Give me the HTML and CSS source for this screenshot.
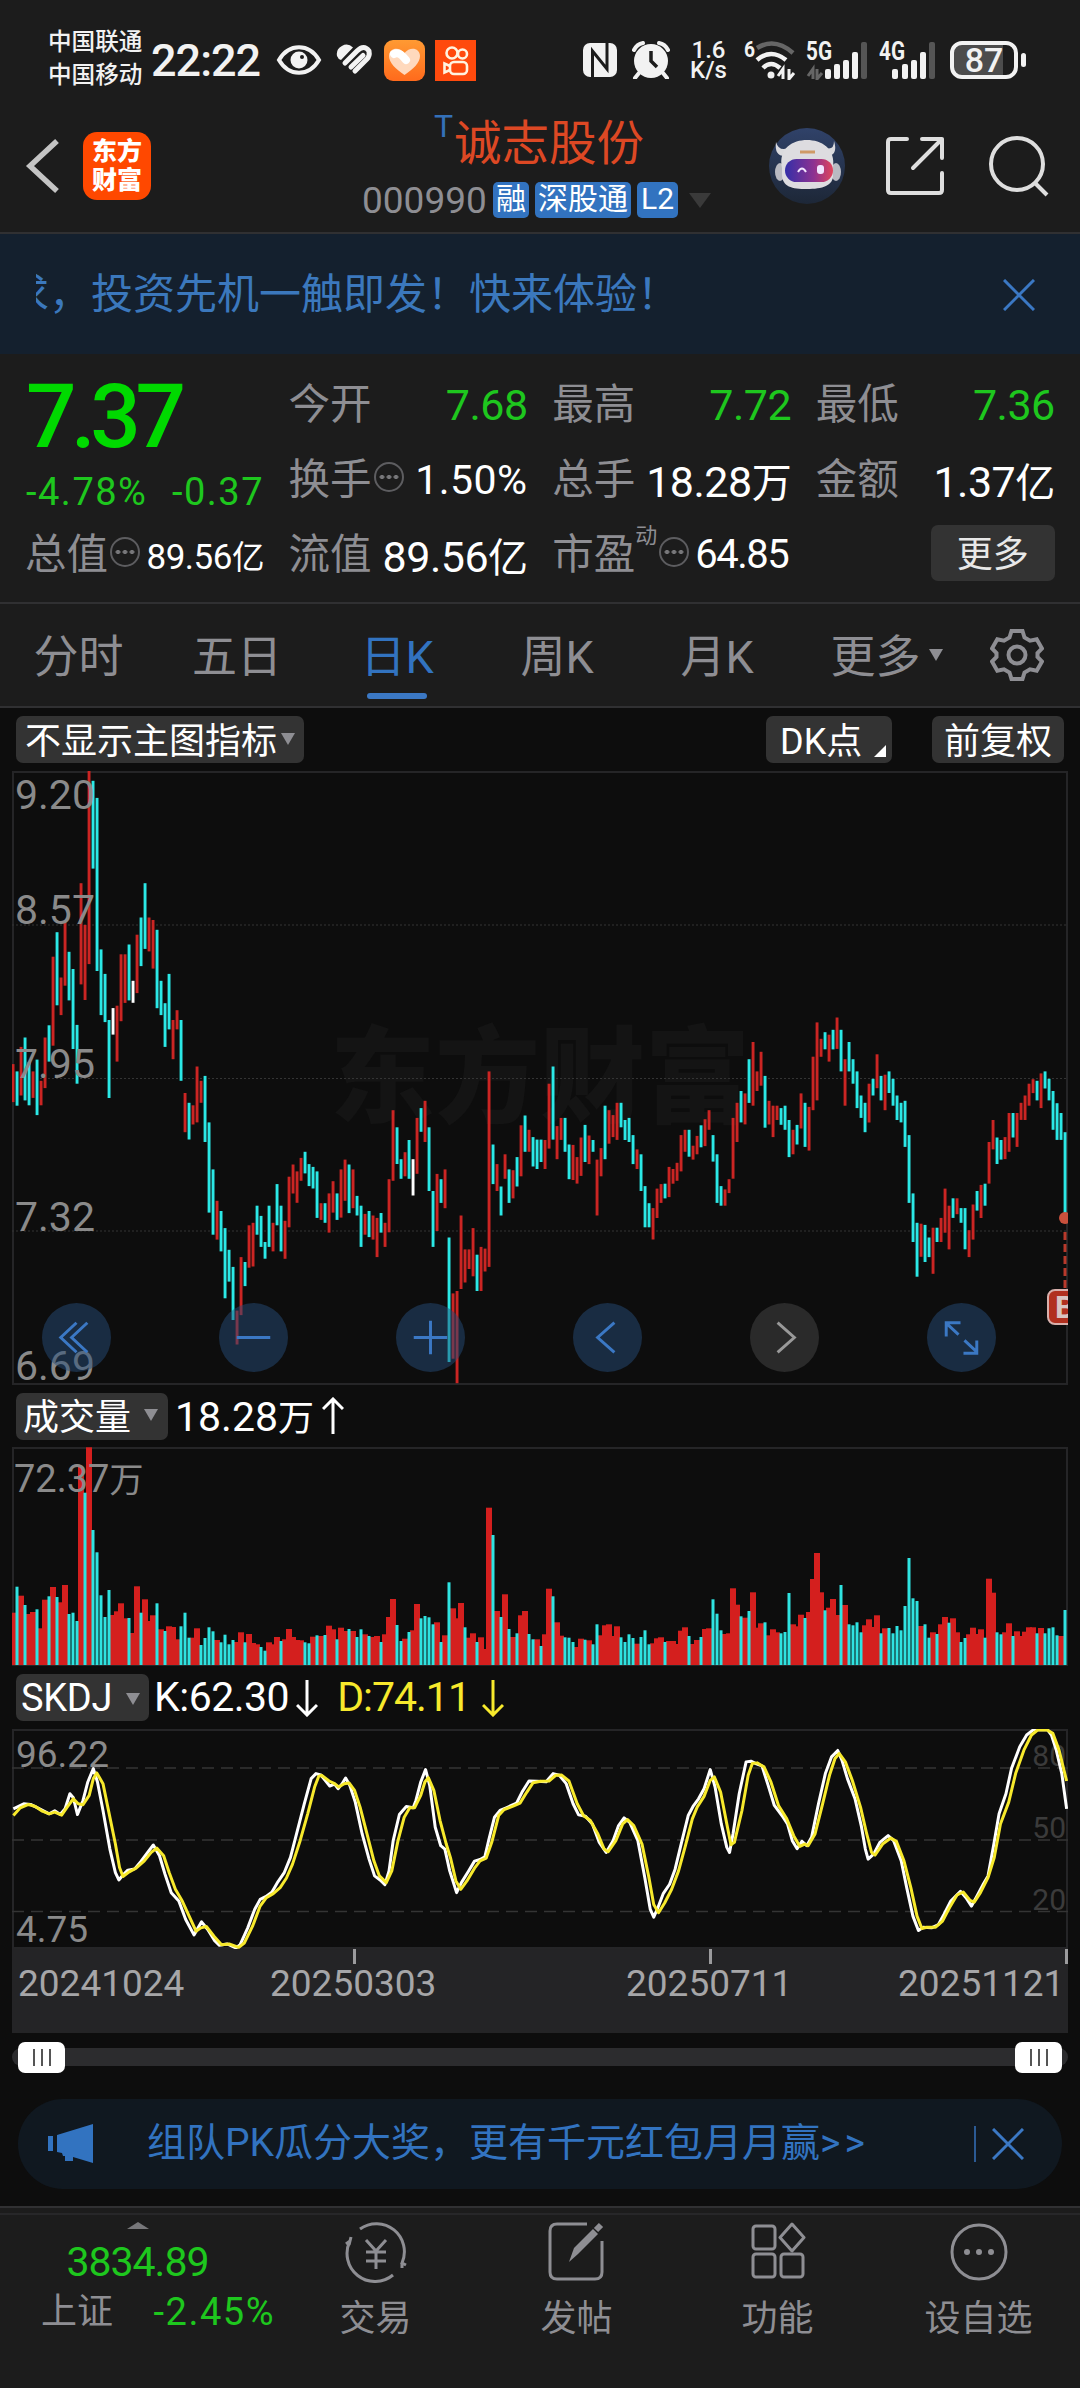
FILE: index.html
```html
<!DOCTYPE html>
<html lang="zh-CN">
<head>
<meta charset="UTF-8">
<meta name="viewport" content="width=device-width, initial-scale=1">
<title>诚志股份 000990</title>
<link rel="stylesheet" href="styles.css">
</head>
<body>

<!-- Status bar -->
<div class="status">
  <div class="carriers"><span>中国联通</span><span>中国移动</span></div>
  <div class="clock">22:22</div>
  <svg class="st-eye" width="46" height="32" viewBox="0 0 46 32"><path d="M3 16C13-1 33-1 43 16C33 33 13 33 3 16Z" fill="none" stroke="#f2f2f2" stroke-width="4"/><circle cx="23" cy="16" r="8.5" fill="#f2f2f2"/><circle cx="26" cy="13" r="2" fill="#1c1c1c"/></svg>
  <svg class="st-health" width="38" height="32" viewBox="0 0 38 32" fill="none" stroke="#f2f2f2" stroke-width="5" stroke-linecap="round"><path d="M1 12A9.500 9.500 0 0 1 17 3.500L5 16Q2 15 1 12Z" fill="#f2f2f2" stroke="none"/><path d="M9 19L21 7Q28 0 33 7Q34 12 31 15L19 27M15 23L27 11.500"/></svg>
  <svg class="st-heart" width="41" height="41" viewBox="0 0 41 41"><defs><linearGradient id="og" x1="0" y1="0" x2="0" y2="1"><stop offset="0" stop-color="#ff9a33"/><stop offset="1" stop-color="#ff6a1c"/></linearGradient></defs><rect width="41" height="41" rx="9" fill="url(#og)"/><path d="M20.500 35C12 29 5 23 5 16C5 8 15 6 20.500 13C26 6 36 8 36 16C36 23 29 29 20.500 35Z" fill="#ffd9bd"/><path d="M10 14Q15 11 22 20" stroke="#fff" stroke-width="8" fill="none" stroke-linecap="round"/></svg>
  <svg class="st-video" width="41" height="41" viewBox="0 0 41 41"><rect width="41" height="41" fill="#ff4a0d"/><g fill="none" stroke="#fff3e0" stroke-width="2.600"><circle cx="17" cy="13" r="5.500"/><circle cx="27.500" cy="14" r="4.500"/><rect x="15" y="22" width="17" height="12" rx="4"/><path d="M15 26L9.500 23.500V32.500L15 30"/></g></svg>

  <svg class="st-nfc" width="34" height="36" viewBox="0 0 34 36"><rect y="1" width="34" height="34" rx="7" fill="#f2f2f2"/><path d="M9.500 31V9L24 27V5" fill="none" stroke="#1c1c1c" stroke-width="3"/><path d="M9.500 31V36M24 5V0" stroke="#1c1c1c" stroke-width="3"/></svg>
  <svg class="st-alarm" width="38" height="38" viewBox="0 0 38 38"><circle cx="19" cy="20" r="17" fill="#f2f2f2"/><path d="M2 9Q5 3 11 2M36 9Q33 3 27 2M7 32L3 37M31 32L35 37" stroke="#f2f2f2" stroke-width="4" stroke-linecap="round"/><path d="M19 10V20L25 26" fill="none" stroke="#1c1c1c" stroke-width="3.500"/></svg>
  <div class="speed"><span>1.6</span><span>K/s</span></div>
  <svg class="st-wifi" width="52" height="40" viewBox="0 0 52 40" fill="none" stroke="#f2f2f2" stroke-width="4.500"><text class="svg-num" x="0" y="17" font-size="22" textLength="11" lengthAdjust="spacingAndGlyphs" fill="#f2f2f2" stroke="none">6</text><path d="M13 8Q31-3 49 13" stroke="#666"/><path d="M13 20Q27 8 42 20M19 28Q27 20 36 28"/><circle cx="27" cy="35" r="3.500" fill="#f2f2f2" stroke="none"/><path d="M39 39V29L34 36M45 29V39L50 33" stroke-width="3"/></svg>
  <svg class="st-signal" width="62" height="40" viewBox="0 0 62 40"><text class="svg-num" x="0" y="20" font-size="25" textLength="26" lengthAdjust="spacingAndGlyphs" fill="#f2f2f2">5G</text><path d="M7 39V29L2 36M11 29V39L16 33" stroke="#666" stroke-width="3" fill="none"/><g fill="#f2f2f2"><rect x="19" y="29" width="6" height="10" rx="2"/><rect x="28" y="24" width="6" height="15" rx="2"/><rect x="37" y="20" width="6" height="19" rx="2"/><rect x="46" y="12" width="6" height="27" rx="2"/></g><rect x="55" y="2" width="6" height="37" rx="2" fill="#555"/></svg>
  <svg class="st-signal4" width="57" height="40" viewBox="0 0 57 40"><text class="svg-num" x="0" y="20" font-size="25" textLength="26" lengthAdjust="spacingAndGlyphs" fill="#f2f2f2">4G</text><g fill="#f2f2f2"><rect x="13" y="29" width="6" height="10" rx="2"/><rect x="23" y="24" width="6" height="15" rx="2"/><rect x="32" y="20" width="6" height="19" rx="2"/><rect x="41" y="12" width="6" height="27" rx="2"/></g><rect x="50" y="2" width="6" height="37" rx="2" fill="#555"/></svg>
  <div class="battery"><span>87</span></div>
</div>

<!-- Title bar -->
<header class="header">
  <svg class="back" width="36" height="56" viewBox="0 0 36 56"><path d="M32 3L5 28L32 53" fill="none" stroke="#c4c4c4" stroke-width="5.500"/></svg>
  <div class="logo"><span>东方</span><span>财富</span></div>
  <div class="title">
    <div class="stock-name"><sup>T</sup>诚志股份</div>
    <div class="stock-code"><span class="code">000990</span><b>融</b><b>深股通</b><b>L2</b><i class="tri tri-dark"></i></div>
  </div>
  <svg class="robot" width="76" height="76" viewBox="0 0 76 76">
    <defs>
      <linearGradient id="bg" x1="0" y1="0" x2="0" y2="1"><stop offset="0" stop-color="#304269"/><stop offset="1" stop-color="#1d2737"/></linearGradient>
      <linearGradient id="visor"><stop offset="0" stop-color="#342fa8"/><stop offset=".6" stop-color="#8d3291"/><stop offset="1" stop-color="#e0455c"/></linearGradient>
    </defs>
    <circle cx="38" cy="38" r="38" fill="url(#bg)"/>
    <path d="M7 14Q5 29 17 28L22 19Q10 25 7 14ZM65 13Q69 26 60 28L54 19Q65 24 65 13Z" fill="#dadade"/>
    <ellipse cx="11" cy="44" rx="5" ry="9" fill="#b9bac2"/><ellipse cx="67" cy="44" rx="5" ry="9" fill="#b9bac2"/>
    <path d="M13 40C9 20 24 12 38 12S67 20 64 40V46C65 58 53 61 38 61S13 59 13 46Z" fill="#dddce0"/>
    <path d="M31 24H46" stroke="#cf9a66" stroke-width="3"/>
    <rect x="16" y="31" width="48" height="23" rx="11.500" fill="url(#visor)"/>
    <path d="M29 44Q33 37 37 44" fill="none" stroke="#f4e6ff" stroke-width="2"/><rect x="48" y="37" width="7" height="9" rx="3" fill="#f1e5ff"/>
  </svg>
  <svg class="share" width="60" height="60" viewBox="0 0 60 60" fill="none" stroke="#dedede" stroke-width="4" stroke-linecap="round" stroke-linejoin="round"><path d="M22 3H6Q3 3 3 6V54Q3 57 6 57H54Q57 57 57 54V37M37 3H57V22M57 3L28 32"/></svg>
  <svg class="search" width="62" height="62" viewBox="0 0 62 62" fill="none" stroke="#dedede" stroke-width="4"><circle cx="29" cy="29" r="26"/><path d="M47 48L59 60"/></svg>
</header>

<!-- Promo marquee -->
<div class="marquee">
  <div class="marquee-clip"><span>求，投资先机一触即发！快来体验！</span></div>
  <svg width="32" height="32" viewBox="0 0 32 32"><path d="M1 1L31 31M31 1L1 31" stroke="#3b78c4" stroke-width="3"/></svg>
</div>

<!-- Quote -->
<section class="quote">
  <div class="price-box">
    <div class="price">7.37</div>
    <div class="change"><span>-4.78%</span><span>-0.37</span></div>
  </div>
  <div class="cell"><label>今开</label><em class="down">7.68</em></div>
  <div class="cell"><label>最高</label><em class="down">7.72</em></div>
  <div class="cell"><label>最低</label><em class="down">7.36</em></div>
  <div class="cell"><label>换手</label><i class="info"></i><em class="mid">1.50%</em></div>
  <div class="cell"><label>总手</label><em>18.28<u>万</u></em></div>
  <div class="cell"><label>金额</label><em>1.37<u>亿</u></em></div>
  <div class="cell"><label>总值</label><i class="info"></i><em class="small">89.56<u>亿</u></em></div>
  <div class="cell"><label>流值</label><em>89.56<u>亿</u></em></div>
  <div class="cell"><label>市盈</label><sup>动</sup><i class="info"></i><em class="pe">64.85</em></div>
  <div class="cell cell-more"><button>更多</button></div>
</section>

<!-- Period tabs -->
<nav class="tabs">
  <a>分时</a><a>五日</a><a class="active">日K</a><a>周K</a><a>月K</a><a class="more">更多<i class="tri tri-small"></i></a>
  <svg width="54" height="54" viewBox="0 0 54 54" fill="none" stroke="#8e8e93" stroke-width="4" stroke-linejoin="miter"><path d="M21.500 3H32.500L34.500 9.500L40 12.700L46.700 11.200L52 20.500L47.500 25V29L52 33.500L46.700 42.800L40 41.300L34.500 44.500L32.500 51H21.500L19.500 44.500L14 41.300L7.300 42.800L2 33.500L6.500 29V25L2 20.500L7.300 11.200L14 12.700L19.500 9.500Z"/><circle cx="27" cy="27" r="8.500"/></svg>
</nav>

<main class="charts">
  <div class="tools">
    <span class="chip chip-main">不显示主图指标<i class="tri tri-small"></i></span>
    <span class="chip chip-dk">DK点<i class="corner"></i></span>
    <span class="chip chip-fq">前复权</span>
  </div>

  <div class="chart chart-k">
    <div class="watermark">东方财富</div>
    <svg id="kline" width="1056" height="614"></svg>
    <div class="scale"><span>9.20</span><span>8.57</span><span>7.95</span><span>7.32</span><span>6.69</span></div>
    <div class="controls">
      <i><svg viewBox="0 0 70 70"><path d="M35 20L19 35L35 50M46 20L30 35L46 50"/></svg></i>
      <i><svg viewBox="0 0 70 70"><path d="M18 35H52"/></svg></i>
      <i><svg viewBox="0 0 70 70"><path d="M18 35H52M35 18V52"/></svg></i>
      <i><svg viewBox="0 0 70 70"><path d="M42 20L25 35L42 50"/></svg></i>
      <i class="off"><svg viewBox="0 0 70 70"><path d="M28 20L45 35L28 50"/></svg></i>
      <i><svg viewBox="0 0 70 70"><path d="M32 32L20 21M19.500 34V20H34M38 38L50 49M50.500 38V51H37"/></svg></i>
    </div>
    <div class="buy">B</div>
  </div>

  <div class="ind-head head-vol">
    <span class="chip chip-vol">成交量<i class="tri tri-mid"></i></span>
    <span class="ind-val">18.28<u>万</u></span>
    <svg class="arrow" width="22" height="38" viewBox="0 0 22 38"><path d="M11 37V3M1 12L11 2L21 12"/></svg>
  </div>
  <div class="chart chart-vol">
    <svg id="volume" width="1056" height="219"></svg>
    <div class="vol-max">72.37<u>万</u></div>
  </div>

  <div class="ind-head">
    <span class="chip chip-skdj">SKDJ<i class="tri tri-mid"></i></span>
    <span class="ind-val">K:62.30</span>
    <svg class="arrow" width="22" height="38" viewBox="0 0 22 38"><path d="M11 1V35M1 26L11 36L21 26"/></svg>
    <span class="ind-val ind-d">D:74.11</span>
    <svg class="arrow arrow-d" width="22" height="38" viewBox="0 0 22 38"><path d="M11 1V35M1 26L11 36L21 26"/></svg>
  </div>
  <div class="chart chart-skdj">
    <div class="levels"><span>80</span><span>50</span><span>20</span></div>
    <svg width="1056" height="220" viewBox="18 177 1532 656" preserveAspectRatio="none">
      <path class="grid-line" d="M18 293H1550M18 508H1550M18 721H1550"/>
      <polyline class="line-k" points="20,415 35,400 45,402 58,415 72,430 80,421 88,432 95,415 102,370 107,382 113,432 121,390 128,335 136,295 142,335 150,420 160,535 168,605 173,627 180,610 186,598 196,594 205,572 214,547 223,523 232,555 240,610 249,665 260,690 270,745 282,791 288,770 293,752 302,775 312,808 319,822 330,818 343,830 349,820 360,770 370,715 378,685 386,677 395,664 404,632 413,605 422,560 432,480 442,400 452,325 459,310 466,314 479,347 486,341 491,355 497,340 502,323 508,345 516,395 526,490 536,565 544,615 552,627 559,641 565,600 571,510 580,432 590,408 600,412 604,390 611,335 618,298 624,345 632,470 640,525 646,535 653,600 663,665 670,635 680,602 689,571 697,566 704,558 710,505 718,440 726,420 735,412 750,398 758,365 768,332 780,333 793,334 803,310 812,315 822,340 832,400 840,433 850,437 860,460 870,515 880,545 890,510 898,465 906,442 914,455 926,510 936,620 944,715 949,738 955,710 963,667 972,640 980,595 990,510 999,435 1006,408 1014,385 1022,355 1031,298 1038,350 1047,460 1055,530 1059,545 1064,490 1073,370 1083,275 1090,273 1098,281 1106,287 1115,345 1124,405 1135,435 1143,460 1150,510 1157,534 1164,512 1171,525 1178,500 1188,400 1198,310 1207,260 1216,241 1222,270 1230,325 1241,385 1250,465 1256,535 1260,565 1268,550 1277,515 1289,495 1297,510 1308,570 1316,650 1325,735 1333,778 1340,768 1352,770 1362,760 1370,730 1380,690 1394,661 1402,680 1410,705 1418,675 1427,640 1434,615 1442,525 1450,430 1460,370 1468,295 1480,230 1490,195 1500,179 1520,179 1526,195 1533,240 1541,310 1548,415"/>
      <polyline class="line-d" points="20,435 30,412 42,402 52,408 62,422 72,430 80,425 90,434 98,410 107,385 114,400 121,403 130,375 136,325 141,308 150,340 159,430 168,520 174,590 179,617 188,603 198,592 210,570 220,545 228,532 238,555 246,605 255,655 265,690 275,735 285,780 292,770 300,766 311,795 322,820 333,818 347,828 355,815 367,765 378,705 387,680 397,668 407,650 416,622 425,580 436,510 447,430 457,350 463,318 467,315 478,332 486,340 492,350 500,340 507,338 515,360 523,410 533,490 543,570 551,615 561,635 569,600 578,510 587,440 595,412 602,412 611,375 617,335 622,322 630,360 639,450 648,520 654,560 662,630 669,655 678,630 689,592 697,570 706,562 714,515 724,435 732,417 745,407 755,398 765,365 774,337 785,333 797,332 807,315 815,314 826,332 838,400 847,435 857,450 868,490 877,535 883,543 894,510 904,460 911,447 920,465 932,520 942,620 949,700 956,725 965,695 975,655 985,600 995,525 1005,445 1012,410 1022,378 1031,330 1037,320 1046,365 1055,460 1061,522 1066,515 1077,420 1086,315 1092,280 1099,278 1109,290 1119,335 1130,405 1142,445 1152,495 1161,527 1168,520 1173,525 1183,490 1194,400 1204,315 1212,265 1218,250 1227,275 1237,330 1249,410 1258,490 1265,545 1270,553 1281,520 1293,502 1301,512 1312,570 1322,650 1331,735 1338,772 1345,768 1358,768 1368,750 1378,710 1389,672 1398,663 1408,688 1414,693 1423,665 1434,620 1443,560 1452,460 1464,395 1474,310 1486,240 1497,195 1506,180 1519,179 1528,190 1537,240 1548,332"/>
    </svg>
    <div class="skdj-max">96.22</div>
    <div class="skdj-min">4.75</div>
  </div>

  <div class="dates">
    <span>20241024</span><span>20250303</span><span>20250711</span><span>20251121</span>
  </div>

  <div class="slider"><i class="handle"></i><i class="handle"></i></div>

  <div class="notice">
    <svg width="46" height="40" viewBox="0 0 46 40" fill="#3273c0"><path d="M45 0V39L25 33V37H17V32H15L14 29L9 28V11Z"/><rect y="12" width="5" height="15"/></svg>
    <span>组队PK瓜分大奖，更有千元红包月月赢<em>&gt;&gt;</em></span>
    <svg class="notice-x" width="32" height="32" viewBox="0 0 32 32"><path d="M1 1L31 31M31 1L1 31" stroke="#3b78c4" stroke-width="3"/></svg>
  </div>
</main>

<!-- Bottom bar -->
<footer class="bottom">
  <div class="index">
    <i class="tri-up"></i>
    <div class="index-val">3834.89</div>
    <div class="index-row"><span>上证</span><em>-2.45%</em></div>
  </div>
  <a>
    <svg width="66" height="62" viewBox="0 0 66 62"><path d="M17 8A28 28 0 0 1 59 42L63 44M59 42V47M50 54A28 28 0 0 1 7 20L3 23M8 16L6 24"/><path d="M23 19L33 30L43 19M33 30V48M23 31H43M23 40H43"/></svg>
    <span>交易</span>
  </a>
  <a>
    <svg width="60" height="62" viewBox="0 0 60 62"><path d="M40 3H10Q3 3 3 10V51Q3 58 10 58H48Q55 58 55 51V20"/><path d="M22 41L27 27L46 8L51 13L31 33Z" fill="#8e8e93" stroke="none"/><path d="M49 9L54 4" stroke-width="6"/></svg>
    <span>发帖</span>
  </a>
  <a>
    <svg width="56" height="62" viewBox="0 0 56 62"><rect x="3" y="5" width="22" height="23" rx="3"/><rect x="3" y="33" width="22" height="23" rx="3"/><rect x="31" y="33" width="22" height="23" rx="3"/><path d="M42 3L54 16.500L42 30L30 16.500Z" stroke-linejoin="round"/></svg>
    <span>功能</span>
  </a>
  <a>
    <svg width="60" height="62" viewBox="0 0 60 62"><circle cx="30" cy="31" r="27"/><g fill="#8e8e93" stroke="none"><circle cx="18" cy="31" r="3"/><circle cx="30" cy="31" r="3"/><circle cx="42" cy="31" r="3"/></g></svg>
    <span>设自选</span>
  </a>
</footer>

<script src="chart.js"></script>
</body>
</html>
```
FILE: styles.css
```css
* { box-sizing: border-box; margin: 0; padding: 0; }
body {
  width: 1080px; height: 2388px; overflow: hidden;
  background: #1c1c1c; color: #fff;
  font-family: Roboto, "Noto Sans CJK SC", sans-serif;
  font-weight: 400;
}
i, em, b { font-style: normal; font-weight: 400; }
u { text-decoration: none; }
svg { display: block; flex: none; }

/* Status bar */
.status { height: 116px; padding: 4px 0 0 48px; display: flex; align-items: center; color: #f2f2f2; }
.carriers { width: 103px; padding-bottom: 2px; display: flex; flex-direction: column; font-size: 23.6px; line-height: 33px; font-weight: 500; }
.clock { width: 125px; font-size: 45px; font-weight: 500; letter-spacing: -1px; white-space: nowrap; }
.st-health { margin-left: 14px; }
.st-heart { margin-left: 10px; }
.st-video { margin-left: 10px; }
.st-nfc { margin-left: 107px; }
.st-alarm { margin-left: 15px; }
.speed { width: 39px; margin-left: 19px; display: flex; flex-direction: column; align-items: center; font-size: 24px; line-height: 20px; font-weight: 500; }
.st-wifi { margin-left: 16px; }
.st-signal { margin-left: 10px; }
.st-signal4 { margin-left: 11px; }
.svg-num { font-weight: 700; }
.battery {
  position: relative; width: 68px; height: 38px; margin-left: 14px;
  border: 4px solid #f2f2f2; border-radius: 12px;
  background: linear-gradient(90deg, #4c4c4c 82%, #1c1c1c 82%);
  display: flex; align-items: center; justify-content: center;
  font-size: 34px; font-weight: 500;
}
.battery::after { content: ""; position: absolute; right: -12px; top: 8px; width: 5px; height: 14px; border-radius: 3px; background: #f2f2f2; }

/* Title bar */
.header { height: 118px; display: flex; align-items: center; padding: 0 30px 16px 25px; border-bottom: 2px solid #303032; }
.logo {
  width: 68px; height: 68px; margin-left: 22px; border-radius: 14px; background: #ff4800;
  display: flex; flex-direction: column; align-items: center; justify-content: center;
  font-size: 25px; line-height: 29px; font-weight: 900; flex: none;
}
.title { width: 400px; margin-left: 199px; flex: none; padding-top: 8px; }
.stock-name { position: relative; padding-left: 104px; font-size: 47.5px; line-height: 60px; color: #dd4824; font-weight: 400; white-space: nowrap; }
.stock-name sup { position: absolute; left: 84px; top: -8px; font-size: 32px; line-height: 40px; color: #3470b8; }
.stock-code { display: flex; align-items: center; height: 52px; padding-left: 12px; }
.code { width: 131px; font-size: 37px; color: #8e8e93; }
.stock-code b { height: 36px; line-height: 33px; padding: 0 3px; margin-right: 6px; border-radius: 5px; background: #3273c0; font-size: 30px; }
.stock-code b:nth-of-type(3) { padding: 0 4px; }
.tri { display: inline-block; border-style: solid; border-color: #8e8e93 transparent transparent; border-width: 12px 7px 0; }
.tri-dark { border-width: 15px 11px 0; border-top-color: #3a3a3a; margin-left: 5px; }
.robot { margin-left: 19px; }
.share { margin-left: 40px; }
.search { margin-left: 43px; }

/* Marquee */
.marquee { height: 120px; background: #14202e; display: flex; align-items: center; justify-content: space-between; padding: 2px 45px 0 36px; }
.marquee-clip { overflow: hidden; width: 700px; white-space: nowrap; }
.marquee-clip span { margin-left: -29px; font-size: 42px; line-height: 60px; color: #3b78bd; font-weight: 400; }

/* Quote */
.quote {
  height: 250px; padding: 13px 25px 0 26px; border-bottom: 2px solid #303032;
  display: grid; grid-template-columns: repeat(4, 238px); column-gap: 25.600px; grid-template-rows: repeat(3, 75px);
}
.price-box { grid-row: span 2; color: #00d900; }
.price { height: 98px; line-height: 100px; font-size: 89px; font-weight: 500; letter-spacing: -5.500px; }
.change { display: flex; justify-content: space-between; font-size: 38px; line-height: 54px; color: #1ec71e; letter-spacing: 1.500px; }
.cell { position: relative; display: flex; align-items: center; white-space: nowrap; }
.cell label { font-size: 41.500px; color: #8e8e93; padding-bottom: 7px; margin-left: -1px; }
.cell em { margin-left: auto; font-size: 43px; letter-spacing: -.5px; }
.cell em.mid { font-size: 41px; letter-spacing: .5px; }
.cell em.pe { font-size: 40px; margin-left: 6px; letter-spacing: -1.500px; }
.cell em.small { font-size: 35px; }
.cell u { font-size: .93em; }
.cell .down { color: #1ec71e; }
.cell sup { font-size: 22px; color: #8e8e93; align-self: flex-start; width: 22px; }
.info {
  width: 30px; height: 30px; margin: 0 0 6px 2px; flex: none; border: 2px solid #5d5d60; border-radius: 50%;
  background: radial-gradient(circle, #77777a 2px, transparent 2.500px) 0 0 / 7px 100%;
  background-position: 2.500px 0; background-clip: content-box; padding: 0 3px;
}
.cell-more { justify-content: flex-end; }
.cell-more button { width: 124px; height: 56px; margin-bottom: 4px; padding-bottom: 4px; border: 0; border-radius: 7px; background: #333; color: #e8e8e8; font: inherit; font-size: 36px; }

/* Tabs */
.tabs { height: 104px; display: flex; align-items: center; border-bottom: 2px solid #303032; color: #8e8e93; font-size: 45px; }
.tabs a { position: relative; top: -2px; width: 160px; text-align: center; white-space: nowrap; }
.tabs a:nth-child(1) { width: 157px; }
.tabs .active { color: #3273c0; }
.tabs .active::after { content: ""; position: absolute; left: 50%; bottom: -13px; width: 60px; height: 6px; margin-left: -30px; border-radius: 3px; background: #3b78c4; }
.tabs .more { width: 174px; padding-left: 5px; }
.tabs .tri { margin-left: 8px; vertical-align: 12px; }
.tabs svg { margin-left: 19px; }

/* Charts */
.charts { height: 1498px; background: #0d0d0d; }
.tools { height: 63px; display: flex; align-items: center; padding: 0 16px; }
.chip { height: 47px; border-radius: 7px; background: #333; display: flex; align-items: center; font-size: 36px; padding: 0 0 4px 9px; white-space: nowrap; flex: none; }
.chip .tri { position: relative; top: 1px; }
.chip-main { width: 288px; }
.chip-main .tri { margin-left: 4px; }
.chip-dk { width: 126px; margin-left: auto; padding-left: 14px; position: relative; }
.corner { position: absolute; right: 6px; bottom: 6px; border-style: solid; border-width: 0 0 12px 12px; border-color: transparent transparent #fff; }
.chip-fq { width: 132px; margin-left: 40px; padding-left: 12px; }
.chart { position: relative; width: 1056px; margin: 0 12px; box-shadow: inset 0 0 0 2px #252527; overflow: hidden; }
.chart > svg { position: relative; }
.chart-k { height: 614px; }
.chart-vol { height: 219px; }
.chart-skdj { height: 220px; }
.watermark { position: absolute; left: 318px; top: 233px; font-size: 105px; line-height: 150px; font-weight: 900; color: #141414; }
.scale span { position: absolute; left: 3px; font-size: 41px; line-height: 40px; color: #8a8a8a; }
.scale span:nth-child(1) { top: 4px; }
.scale span:nth-child(2) { top: 119px; }
.scale span:nth-child(3) { top: 273px; }
.scale span:nth-child(4) { top: 426px; }
.scale span:nth-child(5) { top: 575px; }
.controls { position: absolute; left: 30px; top: 532px; display: flex; gap: 108px; }
.controls i { width: 69px; height: 69px; border-radius: 50%; background: rgba(37, 75, 120, .5); }
.controls .off { background: #2a2a2a; }
.controls path { fill: none; stroke: #3b78c4; stroke-width: 3; }
.controls .off path { stroke: #999; }
.buy { position: absolute; left: 1035px; top: 518px; width: 36px; height: 36px; border: 2px solid #d8b0ac; border-radius: 8px; background: #b1301f; color: #d9c4c1; font-size: 32px; line-height: 33px; font-weight: 700; padding-left: 6px; }
.grid-line { fill: none; stroke: #343434; stroke-width: 1.500px; stroke-dasharray: 12 7; vector-effect: non-scaling-stroke; }
.line-k, .line-d { fill: none; stroke: #fff; stroke-width: 3px; stroke-linejoin: round; vector-effect: non-scaling-stroke; }
.line-d { stroke: #f7e92c; }

.ind-head { height: 63px; display: flex; align-items: center; padding-left: 16px; }
.head-vol { height: 62px; }
.chip-vol { width: 152px; padding-left: 7px; }
.chip-vol .tri { margin-left: 13px; }
.chip-skdj { width: 133px; padding: 0 0 0 5px; font-size: 38px; letter-spacing: -.3px; }
.chip-skdj .tri { margin-left: 14px; }
.ind-val { margin-left: 5px; padding-bottom: 2px; font-size: 41px; letter-spacing: -.500px; white-space: nowrap; }
.head-vol .ind-val { margin-left: 7px; letter-spacing: 0; }
.head-vol .arrow { margin-left: 8px; }
.ind-val u { font-size: 36px; }
.ind-d { margin-left: 19px; color: #f7e92c; letter-spacing: -1px; }
.arrow { margin-left: 7px; fill: none; stroke: #fff; stroke-width: 3; }
.arrow-d { margin-left: 12px; stroke: #f7e92c; }
.vol-max { position: absolute; left: 2px; top: 9px; font-size: 38px; line-height: 46px; color: #8a8a8a; }
.vol-max u { font-size: 34px; }
.skdj-max, .skdj-min { position: absolute; left: 4px; font-size: 37px; line-height: 40px; color: #8a8a8a; }
.skdj-max { top: 6px; }
.skdj-min { top: 181px; }
.levels span { position: absolute; right: 2px; font-size: 30px; line-height: 30px; color: #3b3b3b; }
.levels span:nth-child(1) { top: 12px; }
.levels span:nth-child(2) { top: 84px; }
.levels span:nth-child(3) { top: 156px; }

.dates { position: relative; height: 84px; margin: 0 12px; background: #242426; color: #a6a6a8; font-size: 37px; line-height: 70px; display: flex; }
.dates span { width: 168px; padding-left: 6px; position: relative; }
.dates span:nth-child(2) { margin-left: 84px; }
.dates span:nth-child(3) { margin-left: 188px; }
.dates span:nth-child(4) { margin-left: 104px; }
.dates span:not(:first-child)::before { content: ""; position: absolute; top: 0; left: 89px; width: 3px; height: 15px; background: #9b9b9d; }
.dates span:last-child::before { left: 173px; }

.slider { height: 18px; margin: 15px 12px 0; border-radius: 9px; background: #2c2c2e; display: flex; justify-content: space-between; align-items: center; padding: 0 6px; }
.handle { width: 47px; height: 31px; border-radius: 7px; background: repeating-linear-gradient(90deg, #555 0 2px, #fff 2px 8px) center / 18px 17px no-repeat content-box, #fff; padding: 7px 14px; }

.notice { height: 90px; margin: 33px 18px 0; padding: 0 38px 0 30px; border-radius: 45px; background: #101820; display: flex; align-items: center; }
.notice span { margin-left: 53px; padding-bottom: 2px; font-size: 39px; line-height: 56px; color: #3273c0; white-space: nowrap; }
.notice em { letter-spacing: 4px; }
.notice::after { content: ""; width: 2px; height: 36px; background: #2b5a94; order: 1; margin-left: auto; }
.notice-x { order: 2; margin-left: 16px; }

/* Bottom bar */
.bottom { height: 183px; border-top: 2px solid #303032; display: flex; position: relative; }
.bottom::before { content: ""; position: absolute; left: 0; right: 0; top: 5px; height: 2px; background: #272729; }
.index { width: 275px; text-align: center; }
.tri-up { display: block; width: 0; margin: 14px auto 0; border-style: solid; border-width: 0 11px 7px; border-color: transparent transparent #77777a; }
.index-val { margin-top: 9px; font-size: 41px; line-height: 48px; color: #1ec71e; letter-spacing: -1px; }
.index-row { display: flex; justify-content: space-between; align-items: center; padding: 0 0 0 41px; font-size: 36px; line-height: 52px; color: #8e8e93; }
.index-row em { color: #1ec71e; font-size: 38px; letter-spacing: 1.500px; }
.bottom a { width: 201px; display: flex; flex-direction: column; align-items: center; padding-top: 13px; color: #8e8e93; font-size: 36px; line-height: 50px; }
.bottom a span { margin-top: 11px; }
.bottom a svg { fill: none; stroke: #8e8e93; stroke-width: 3; }
```
FILE: chart.js
```js
// one bar per trading day: colour, high, low (r up, c down, w flat)
const K = `r745,838 c763,847 r703,822 c680,834 c740,846 r763,828 c734,870 r786,846 r680,804 c650,739 r482,700 c422,601
r533,625 r398,553 c470,589 c512,708 c649,793 r302,550 r404,588 r27,500 c51,266 c93,517 c464,625 c524,642 c637,828
w608,673 r602,739 r476,640 r476,595 c452,589 w541,595 r428,571 c386,505 c302,463 r386,469 r392,511 c416,608 c541,625
c596,703 c524,660 r637,733 r613,660 c637,786 r816,912 c840,930 r846,893 r751,888 r786,840 c774,936 c888,1109
c1003,1163 r1080,1175 c1105,1204 c1147,1319 c1200,1278 c1242,1372 r1349,1432 r1218,1360 c1230,1289 r1140,1244
r1134,1241 c1092,1163 c1117,1193 c1181,1222 c1092,1193 r1134,1204 c1039,1140 c1092,1204 r1129,1222 r1021,1145
r991,1062 r1008,1085 r975,1031 c960,1013 c990,1044 c997,1050 c1008,1122 r1086,1127 c1086,1134 r1062,1158 r1032,1109
c1062,1127 r1003,1121 r979,1080 c991,1110 r1003,1098 c1068,1116 c1092,1193 r1112,1163 c1105,1169 r1116,1175
r1122,1218 c1110,1158 r1134,1193 r1027,1157 r858,1031 c900,990 c978,1026 r961,1020 c931,1026 w978,1067 r877,1014
c853,911 r835,936 c900,1056 c1056,1193 r1014,1154 c1027,1085 r1003,1098 c1170,1475 r1307,1467 r1301,1527 r1116,1296
r1199,1280 r1199,1247 r1147,1265 c1212,1301 r1193,1301 r1197,1253 r763,1242 c942,1039 r990,1056 c1045,1116
r966,1026 c1003,1085 r1005,1074 c973,1045 r895,1020 c871,960 r906,960 c924,996 c930,1002
c930,985 r931,1002 r793,952 c751,930 r897,978 r877,931 c877,960 c942,1027 r943,1029 r973,1038 r925,1019 c894,985
r920,990 c931,960 r979,1116 r951,1020 c847,978 r858,940 r870,924 r840,931 c840,900 c882,931 c877,936 c919,990
r954,1002 c966,1056 c1044,1145 c1086,1145 r1098,1175 r1050,1122 r1039,1085 c1038,1074 r997,1071 r1002,1038 r987,1031
r919,1008 r906,960 c906,972 r945,979 r921,966 c895,949 r880,946 r858,906 c919,984 c966,1085 c1044,1092 r1052,1092
r1027,1061 r877,1026 r840,936 c811,888 r817,893 c733,840 r691,847 r763,811 r715,798 c774,901 r835,893 r847,924
r847,882 c853,894 c847,906 c882,973 r906,966 c894,942 r817,903 c840,948 r850,957 r727,858 r643,834 r683,727
c667,709 r673,739 c661,709 r631,708 c661,763 r733,847 c691,763 c733,793 c763,853 c822,877 c840,912 r793,888
c781,822 r721,804 c774,834 r771,858 c763,816 c781,847 c822,882 c840,888 c835,948 c919,1085 c1062,1181 c1134,1266
r1136,1217 c1139,1230 c1170,1218 r1146,1259 c1146,1181 r1122,1181 r1050,1158 r1092,1199 c1074,1122 r1074,1113
c1098,1134 c1098,1199 r1152,1218 r1089,1175 c1056,1104 r1041,1122 c1038,1092 r936,1038 r882,954 c925,990 c931,979
r924,978 r865,960 c865,925 r865,948 r840,882 r822,882 r793,847 r782,816 c786,834 r768,853 c763,805 c781,834
c811,906 c841,931 c865,931 c912,1128`.trim().split(/\s+/);

// volume bar tops
const V = `r698 c620 r647 c675 r702 r696 c688 r745 r659 c649 r621 c651 r667 r615 c702 c698 c723 r261 c338 r202 c450 c517
c646 c711 c630 r705 r694 r670 r715 c714 r759 r619 c698 r658 r723 r706 c670 r748 c753 r739 r741 r778 c739 c698 c773
r773 r745 c795 c774 c742 c754 r780 c787 c764 c793 c780 r786 r757 c787 r762 r789 r793 c801 c812 r787 r793 r771 c783
r778 r747 r771 r780 r781 c787 c790 r770 c766 r768 c765 r737 r748 c778 r743 r753 c747 r753 c771 c748 r763 c768 r771
r768 c786 r763 r711 r657 c735 c783 r776 c756 r751 r672 c715 c708 c712 c733 r727 c786 r766 c607 r685 r715 r669 c742
r773 r760 c786 r772 r807 r383 c465 r693 c711 r643 c747 r771 c760 r706 r693 c762 c778 r778
c798 r763 r626 c649 r727 r767 c772 c773 c786 r801 r776 c779 r781 c793 c733 r766 r736 r733 r768 r739 c772 c786 c763
c774 r791 c771 c751 c793 r790 r775 r772 c786 r783 r783 r792 r752 r742 c768 r792 r780 c771 r747 r745 c658 c701 c751
r762 r760 r625 r674 c709 r713 c693 r637 r743 r730 c727 r766 r748 r757 c760 c756 c639 r733 r739 r704 c714 r696 r597
r519 r637 c691 r683 r657 r705 c615 r675 c733 c736 c727 c757 r736 r718 r741 r706 c760 r745 c744 c760 c738 c751 c678
c534 c655 c663 r738 c733 c773 r757 c762 r733 r711 c728 r715 r757 c786 c774 r763 r743 r762 r748 c773 r596 r638 c757
c763 r757 r730 c768 r754 r768 r755 r742 r742 c760 r744 c760 c745 c742 c766 r768 c690`.trim().split(/\s+/);

const COLOR = { r: '#cb2523', c: '#2be8e6', w: '#ffffff' };
const rect = (x, y, w, h, fill) => `<rect x="${x}" y="${y.toFixed(1)}" width="${w}" height="${h.toFixed(1)}" fill="${fill}"/>`;

let out = '';
[154, 307.5, 460].forEach(y => {
  out += `<line x1="0" x2="1056" y1="${y}" y2="${y}" stroke="#343434" stroke-dasharray="2 2"/>`;
});
K.forEach((d, i) => {
  const [hi, lo] = d.slice(1).split(',').map(Number);
  out += rect(4 * i - 0.4, (hi - 27) / 2.45, 2.9, (lo - hi) / 2.45, COLOR[d[0]]);
});
// buy marker
out += '<line x1="1053" x2="1053" y1="461" y2="520" stroke="#b8392b" stroke-width="3" stroke-dasharray="8 4"/>';
out += '<circle cx="1053" cy="447" r="6" fill="#c8503c"/>';
document.getElementById('kline').innerHTML = out;

let red = '', cyan = '';
V.forEach((d, i) => {
  const h = (855 - d.slice(1)) / 3;
  if (d[0] === 'r') red += rect(4 * i - 2, 218 - h, 6, h, '#d41f1e');
  else cyan += rect(4 * i - 0.5, 218 - h, 3, h, '#2fe3e1');
});
document.getElementById('volume').innerHTML = red + cyan;
```
